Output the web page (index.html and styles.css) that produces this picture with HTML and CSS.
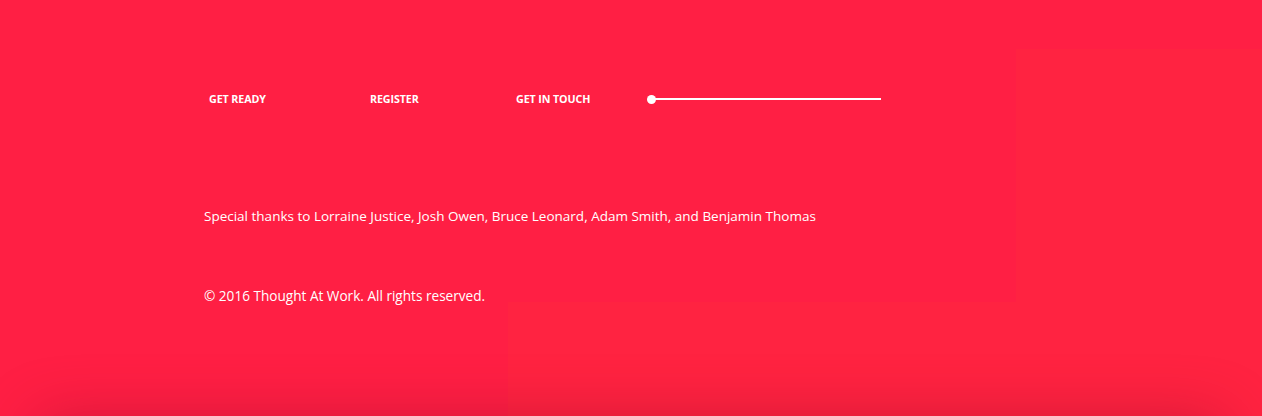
FILE: index.html
```html
<!DOCTYPE html>
<html>
<head>
<meta charset="utf-8">
<link rel="stylesheet" href="styles.css">
</head>
<body>
<div class="page">
  <div class="bg bg-right"></div>
  <div class="bg bg-bottom"></div>
  <div class="shadow"></div>
  <footer class="footer">
    <nav class="nav">
      <a class="nav-item nav-ready">GET READY</a>
      <a class="nav-item nav-register">REGISTER</a>
      <a class="nav-item nav-touch">GET IN TOUCH</a>
      <div class="slider"><span class="dot"></span><span class="line"></span></div>
    </nav>
    <p class="thanks">Special thanks to Lorraine Justice, Josh Owen, Bruce Leonard, Adam Smith, and Benjamin Thomas</p>
    <p class="copy">© 2016 Thought At Work. All rights reserved.</p>
  </footer>
</div>
</body>
</html>
```
FILE: styles.css
```css
* { box-sizing: border-box; }
html, body { margin: 0; padding: 0; }
body {
  background: #ff1f44;
  font-family: "Open Sans", "Noto Sans", sans-serif;
  color: #fff;
  overflow: hidden;
}
.page {
  position: relative;
  width: 1262px;
  height: 416px;
  overflow: hidden;
}
.bg { position: absolute; background: #ff2341; }
.bg-right { left: 1016px; top: 49px; right: 0; bottom: 0; }
.bg-bottom { left: 508px; top: 302px; right: 0; bottom: 0; }
.shadow {
  position: absolute;
  left: 60px;
  right: 60px;
  top: 440px;
  height: 40px;
  box-shadow: 0 0 60px 20px rgba(150, 10, 40, 0.45);
}
.footer {
  position: relative;
  padding: 92px 0 0 204px;
}
.nav {
  display: flex;
  align-items: center;
  height: 14px;
  padding-left: 5px;
}
.nav-item {
  font-size: 10.7px;
  font-weight: 700;
  letter-spacing: -0.1px;
  color: #fff;
}
.nav-ready { width: 161px; }
.nav-register { width: 146px; }
.nav-touch { width: 131px; }
.slider {
  display: flex;
  align-items: center;
  width: 234px;
}
.dot {
  width: 9px;
  height: 9px;
  border-radius: 50%;
  background: #fff;
  flex: none;
}
.line {
  height: 2px;
  background: #fff;
  flex: 1;
  margin-left: -1px;
}
.thanks {
  margin: 101px 0 0;
  font-size: 13.5px;
  line-height: 18px;
}
.copy {
  margin: 62px 0 0;
  font-size: 13.6px;
  line-height: 18px;
}
```
